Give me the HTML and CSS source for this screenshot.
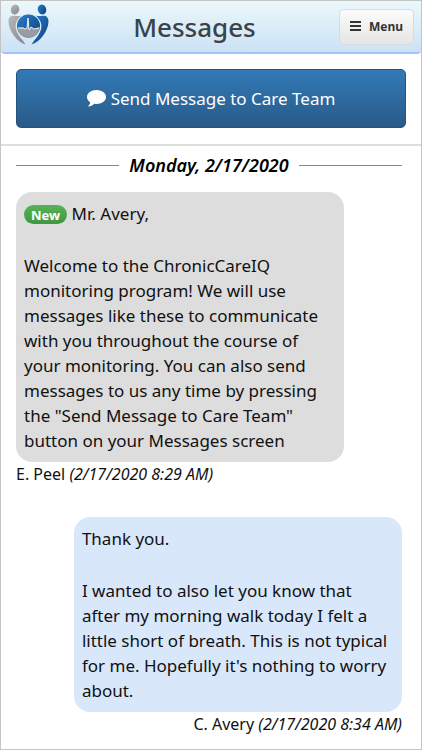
FILE: index.html
```html
<!DOCTYPE html>
<html lang="en">
<head>
	<meta charset="utf-8">
	<meta name="viewport" content="width=device-width, initial-scale=1">
	<title>Messages</title>
	<link rel="stylesheet" href="styles.css">
</head>
<body>
	<header class="topbar">
		<svg class="logo" viewBox="0 0 42 42" aria-hidden="true">
			<defs>
				<linearGradient id="silver" x1="0" y1="0" x2="1" y2="1">
					<stop offset="0" stop-color="#b9b9bc"/>
					<stop offset="1" stop-color="#85868b"/>
				</linearGradient>
				<linearGradient id="blue" x1="0" y1="0" x2="1" y2="1">
					<stop offset="0" stop-color="#2c7fc8"/>
					<stop offset="1" stop-color="#08417f"/>
				</linearGradient>
			</defs>
			<!-- left and right person -->
			<ellipse cx="7" cy="5.500" rx="4.200" ry="5" transform="rotate(15 7 5.500)" fill="url(#silver)"/>
			<path d="M0.500 18C0.500 13 3 11.500 6 11.800C9 12 11 12.500 13.500 11.500C8 16 6 22 9 28C11 33 15 36 17.500 40.500C9 38 1 27 0.500 18Z" fill="url(#silver)"/>
			<ellipse cx="34" cy="5.500" rx="4.200" ry="5" transform="rotate(-15 34 5.500)" fill="url(#blue)"/>
			<path d="M40.500 18C40.500 13 38 11.500 35 11.800C32 12 30 12.500 27.500 11.500C33 16 35 22 32 28C30 33 26 36 23.500 40.500C32 38 40 27 40.500 18Z" fill="url(#blue)"/>
			<!-- heartbeat globe -->
			<circle cx="20.500" cy="22" r="12.300" fill="#dcecf7"/>
			<circle cx="20.500" cy="22" r="11.500" fill="url(#blue)"/>
			<path d="M9 24L15 23L17 25L19 24L20 14L21 26L23 23L26 25L32 23C31 30 26 33.500 20.500 33.500S10 30 9 24Z" fill="#9a9ca2"/>
			<path d="M10 24H15L17 25L19 24L20 14L21 26L23 23L26 25L31 24" fill="none" stroke="#e6f0f8" stroke-width="1"/>
		</svg>
		<h1>Messages</h1>
		<button type="button" class="menu_btn">
			<svg class="bars" viewBox="0 0 11 11" aria-hidden="true"><path d="M0 1H11M0 5H11M0 9H11" stroke="#333" stroke-width="2"/></svg>
			Menu
		</button>
	</header>

	<div class="send_area">
		<button type="button" class="send_btn">
			<svg class="bubble_icon" viewBox="0 0 19 17" aria-hidden="true"><path d="M9.500 0C14.700 0 19 3 19 7S14.700 14 9.500 14L7.500 13.800C5.500 15.500 3.500 16.300 1.500 16.500C1 16.300 1.300 16 1.700 15.600C2.700 14.700 3 13.700 3.200 12.300C1.200 11 0 9.200 0 7C0 3 4.300 0 9.500 0Z" fill="#fff"/></svg>
			Send Message to Care Team
		</button>
	</div>

	<main>
		<h2 class="day">Monday, 2/17/2020</h2>

		<div class="message">
			<div class="bubble">
				<p><span class="new">New</span> Mr. Avery,</p>
				<p>Welcome to the ChronicCareIQ<br>monitoring program! We will use<br>messages like these to communicate<br>with you throughout the course of<br>your monitoring. You can also send<br>messages to us any time by pressing<br>the "Send Message to Care Team"<br>button on your Messages screen</p>
			</div>
			<div class="sender">E. Peel <em>(2/17/2020 8:29 AM)</em></div>
		</div>

		<div class="message mine">
			<div class="bubble">
				<p>Thank you.</p>
				<p>I wanted to also let you know that<br>after my morning walk today I felt a<br>little short of breath. This is not typical<br>for me. Hopefully it's nothing to worry<br>about.</p>
			</div>
			<div class="sender">C. Avery <em>(2/17/2020 8:34 AM)</em></div>
		</div>
	</main>
</body>
</html>
```
FILE: styles.css
```css
* {
	box-sizing: border-box;
}

body {
	margin: 0;
	min-height: 100vh;
	border: 1px solid #c4c4c6;
	background-color: #fff;
	font-family: "Noto Sans", "Open Sans", sans-serif;
	font-size: 17px;
	line-height: 25px;
	color: #111;
}

h1, h2, p {
	margin: 0;
}

button {
	font-family: inherit;
	cursor: pointer;
}

.topbar {
	display: flex;
	align-items: center;
	height: 53px;
	padding: 0 7px;
	background: linear-gradient(#ebf8fa, #cbe2f6);
	border-bottom: 2px solid #a3c1fb;
	border-radius: 0 0 4px 4px;
}

.topbar h1 {
	flex: 1;
	font-size: 26px;
	line-height: 36px;
	font-weight: 500;
	text-align: center;
	color: #3c4248;
}

.logo {
	width: 42px;
	height: 42px;
	margin-bottom: 4px;
}

.menu_btn {
	display: flex;
	align-items: center;
	gap: 8px;
	height: 36px;
	padding: 0 10px;
	border: 1px solid #d8dbdf;
	border-radius: 5px;
	background: linear-gradient(#fcfcfc, #e5e5e6);
	font-size: 12px;
	font-weight: bold;
	color: #333;
}

.bars {
	width: 11px;
	height: 11px;
}

.send_area {
	padding: 15px 15px 16px;
	border-bottom: 2px solid #dedede;
}

.send_btn {
	display: flex;
	align-items: center;
	justify-content: center;
	gap: 5px;
	width: 100%;
	height: 59px;
	border: 1px solid #245580;
	border-radius: 5px;
	background: linear-gradient(#337ab7, #285a88);
	font-size: 17px;
	color: #fff;
}

.bubble_icon {
	width: 19px;
	height: 17px;
}

main {
	padding: 7px 19px 12px 15px;
}

.day {
	display: flex;
	align-items: center;
	gap: 10px;
	font-size: 18px;
	font-style: italic;
	font-weight: 600;
	color: #000;
}

.day::before,
.day::after {
	content: "";
	flex: 1;
	border-top: 1px solid #888;
}

.message {
	display: flex;
	flex-direction: column;
	align-items: flex-start;
	margin-top: 14px;
}

.mine {
	align-items: flex-end;
	margin-top: 30px;
}

.bubble {
	width: 85%;
	padding: 9px 8px;
	border-radius: 16px;
	background-color: #ddd;
	white-space: nowrap;
}

.mine .bubble {
	background-color: #d9e7fb;
}

.bubble p + p {
	margin-top: 27px;
}

.new {
	padding: 1px 7px 0;
	border-radius: 10px;
	background: linear-gradient(#56b356, #3f973f);
	font-size: 13px;
	line-height: 20px;
	font-weight: bold;
	color: #fff;
}

.sender {
	font-size: 16px;
}
```
